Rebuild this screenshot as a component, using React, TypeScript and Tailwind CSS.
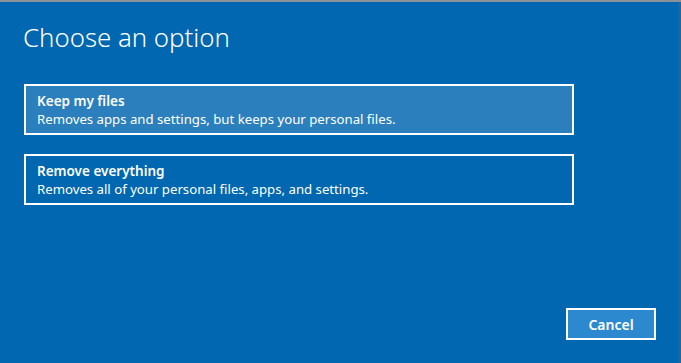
export default function App() {
  const options = [
    {
      title: "Keep my files",
      desc: "Removes apps and settings, but keeps your personal files.",
      active: true,
    },
    {
      title: "Remove everything",
      desc: "Removes all of your personal files, apps, and settings.",
      active: false,
    },
  ];

  return (
    <div
      className="w-[681px] h-[363px] flex flex-col overflow-hidden bg-[#0067b0]"
      style={{ fontFamily: '"Noto Sans", "Open Sans", sans-serif' }}
    >
      <div className="h-[2px] bg-[#8c9196] shrink-0" />
      <div className="flex-1 flex flex-col border-r-2 border-[#3b5f7c] pl-[24px] pr-[23px]">
        <h1 className="mt-[20px] ml-[-1px] text-[25.8px] leading-[30px] font-light text-white">
          Choose an option
        </h1>
        <div className="mt-[32px] flex flex-col gap-[19px] w-[550px]">
          {options.map((o) => (
            <div
              key={o.title}
              className={`h-[51px] border-2 border-white px-[11px] pt-[6px] text-white ${
                o.active ? "bg-[#2a7fbc]" : ""
              }`}
            >
              <div className="text-[13.5px] leading-[18px] font-semibold">{o.title}</div>
              <div className="text-[13.2px] leading-[18px]">{o.desc}</div>
            </div>
          ))}
        </div>
        <div className="flex-1" />
        <div className="flex justify-end mb-[23px]">
          <button className="w-[90px] h-[32px] border-2 border-white bg-[#2c89cf] text-white text-[14px] font-semibold">
            Cancel
          </button>
        </div>
      </div>
    </div>
  );
}
